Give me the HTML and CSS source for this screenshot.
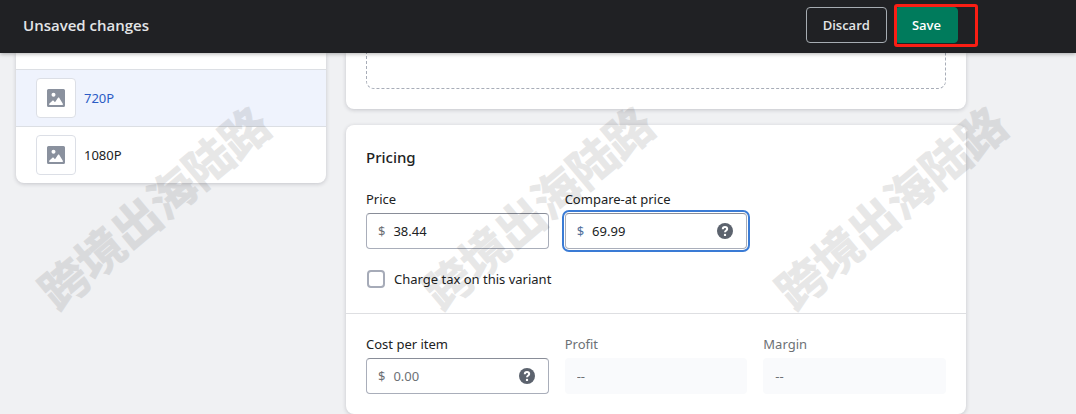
FILE: index.html
```html
<!DOCTYPE html>
<html lang="en">
<head>
    <meta charset="UTF-8">
    <meta name="viewport" content="width=device-width, initial-scale=1.0">
    <title>Unsaved changes</title>
    <link rel="stylesheet" href="styles.css">
</head>
<body>
    <header class="topbar">
        <h1>Unsaved changes</h1>
        <div class="actions">
            <button type="button" class="btn">Discard</button>
            <div class="save">
                <button type="submit" form="variant-form" class="btn btn-primary">Save</button>
                <span class="highlight"></span>
            </div>
        </div>
    </header>

    <div class="page">
        <nav class="card variants">
            <a href="#720p" class="variant active">
                <span class="thumb">
                    <svg viewBox="0 0 20 20" width="20" height="20"><path fill-rule="evenodd" d="M2.5 1h15A1.5 1.5 0 0 1 19 2.5v15a1.5 1.5 0 0 1-1.5 1.5h-15A1.5 1.5 0 0 1 1 17.5v-15A1.5 1.5 0 0 1 2.500 1zM7.500 4.700a2 2 0 1 0 0 4 2 2 0 0 0 0-4zM3.900 17h12.200c.7 0 1.100-.7.700-1.300L13.200 9.800c-.3-.5-.9-.5-1.200 0l-3 4.500-1.400-1.600c-.3-.4-.9-.4-1.200.1l-3.200 3c-.4.500 0 1.200.7 1.200z"/></svg>
                </span>
                720P
            </a>
            <a href="#1080p" class="variant">
                <span class="thumb">
                    <svg viewBox="0 0 20 20" width="20" height="20"><path fill-rule="evenodd" d="M2.5 1h15A1.5 1.5 0 0 1 19 2.5v15a1.5 1.5 0 0 1-1.5 1.5h-15A1.5 1.5 0 0 1 1 17.5v-15A1.5 1.5 0 0 1 2.500 1zM7.500 4.700a2 2 0 1 0 0 4 2 2 0 0 0 0-4zM3.900 17h12.200c.7 0 1.100-.7.700-1.300L13.200 9.800c-.3-.5-.9-.5-1.200 0l-3 4.500-1.400-1.600c-.3-.4-.9-.4-1.200.1l-3.200 3c-.4.500 0 1.200.7 1.200z"/></svg>
                </span>
                1080P
            </a>
        </nav>

        <main>
            <section class="card options">
                <div class="dropzone"></div>
            </section>

            <form id="variant-form" class="card">
                <section class="section">
                    <h2>Pricing</h2>
                    <div class="fields">
                        <div class="field">
                            <label for="price">Price</label>
                            <div class="input">
                                <span class="prefix">$</span>
                                <input type="text" id="price" value="38.44">
                            </div>
                        </div>
                        <div class="field">
                            <label for="compare">Compare-at price</label>
                            <div class="input focused">
                                <span class="prefix">$</span>
                                <input type="text" id="compare" value="69.99">
                                <svg class="help" viewBox="0 0 16 16" width="16" height="16"><circle cx="8" cy="8" r="8"/><path d="M5.800 6.300C5.800 4.900 6.700 4.100 8 4.100s2.200.8 2.200 1.900C10.200 7.600 8 7.500 8 9.300"/><circle class="dot" cx="8" cy="11.900" r="1.200"/></svg>
                            </div>
                        </div>
                    </div>
                    <div class="check">
                        <input type="checkbox" id="tax">
                        <label for="tax">Charge tax on this variant</label>
                    </div>
                </section>

                <section class="section">
                    <div class="fields">
                        <div class="field">
                            <label for="cost">Cost per item</label>
                            <div class="input">
                                <span class="prefix">$</span>
                                <input type="text" id="cost" placeholder="0.00">
                                <svg class="help" viewBox="0 0 16 16" width="16" height="16"><circle cx="8" cy="8" r="8"/><path d="M5.800 6.300C5.800 4.900 6.700 4.100 8 4.100s2.200.8 2.200 1.900C10.200 7.600 8 7.500 8 9.300"/><circle class="dot" cx="8" cy="11.900" r="1.200"/></svg>
                            </div>
                        </div>
                        <div class="field disabled">
                            <label for="profit">Profit</label>
                            <div class="input">
                                <input type="text" id="profit" value="--" disabled>
                            </div>
                        </div>
                        <div class="field disabled">
                            <label for="margin">Margin</label>
                            <div class="input">
                                <input type="text" id="margin" value="--" disabled>
                            </div>
                        </div>
                    </div>
                </section>
            </form>
        </main>
    </div>

    <div class="watermark first" lang="zh">跨境出海陆路</div>
    <div class="watermark second" lang="zh">跨境出海陆路</div>
    <div class="watermark third" lang="zh">跨境出海陆路</div>
</body>
</html>
```
FILE: styles.css
```css
* { box-sizing: border-box; }
body { margin: 0; position: relative; overflow-x: hidden; background: #f0f1f3; color: #202223; font: 13px/20px "Noto Sans", "Open Sans", sans-serif; }
h1, h2 { margin: 0; }
input, button { font: inherit; color: inherit; }

/* top bar */
.topbar { position: relative; z-index: 1; display: flex; align-items: center; justify-content: space-between; padding: 7px 118px 10px 23px; background: #202124; color: #e3e5e7; box-shadow: 0 1px 4px rgba(0, 0, 0, 0.3); }
.topbar h1 { font-family: "Open Sans", sans-serif; font-size: 15px; font-weight: 600; line-height: 24px; }
.actions { display: flex; gap: 8px; }
.btn { display: block; height: 36px; padding: 0 16px; border: 1px solid #a6acb2; border-radius: 4px; background: transparent; font-family: "Open Sans", sans-serif; font-weight: 600; }
.btn-primary { border-color: #007b5c; background: #007b5c; color: #fff; }
.save { position: relative; }
.highlight { position: absolute; top: -3px; bottom: -4px; left: -1px; right: -20px; border: 3px solid #fa1e14; border-radius: 3px; pointer-events: none; }

/* layout */
.page { display: grid; grid-template-columns: 1fr 2fr; gap: 20px; align-items: start; padding: 0 110px 0 16px; }
main { display: grid; gap: 16px; }
.card { overflow: hidden; border-radius: 8px; background: #fff; box-shadow: 0 1px 4px rgba(23, 24, 40, 0.2); }

/* variant list */
.variants { padding-top: 16px; border-radius: 0 0 8px 8px; }
.variant { display: flex; align-items: center; gap: 8px; padding: 8px 20px; border-top: 1px solid #dcdfe4; color: #202223; text-decoration: none; }
.variant.active { background: #eff3fd; color: #2c5cc5; }
.thumb { display: flex; align-items: center; justify-content: center; width: 40px; height: 40px; border: 1px solid #dcdfe6; border-radius: 4px; background: #fff; }
.thumb svg { fill: #8a919e; }

/* main column */
.options { padding: 0 20px 20px; border-radius: 0 0 8px 8px; }
.dropzone { height: 36px; border: 1px dashed #a8adb8; border-top: 0; border-radius: 0 0 8px 8px; }
.section { padding: 20px; }
.section + .section { border-top: 1px solid #dedfe2; }
.section h2 { margin-bottom: 20px; font-size: 15px; font-weight: 500; line-height: 24px; }
.fields { display: grid; grid-template-columns: repeat(3, minmax(0, 1fr)); gap: 16px; }
.field label { display: block; margin-bottom: 4px; }
.input { display: flex; align-items: center; gap: 8px; height: 36px; padding: 0 13px 0 11px; border: 1px solid #a9aeba; border-top-color: #898d98; border-radius: 4px; background: #fff; }
.input input { flex: 1; min-width: 0; padding: 0; border: 0; outline: 0; background: transparent; }
.input input::placeholder { color: #6d7175; opacity: 1; }
.prefix { color: #6d7175; }
.focused { box-shadow: 0 0 0 1px #fff, 0 0 0 3px #3a7bd5; }
.focused .prefix { color: #54719c; }
.help { fill: #5c636e; }
.help path { fill: none; stroke: #fff; stroke-width: 2; }
.help .dot { fill: #fff; }
.disabled { color: #6d7175; }
.disabled .input { border-color: transparent; background: #f9fafc; }
.check { display: flex; align-items: center; gap: 8px; height: 28px; margin-top: 16px; }
.check input { appearance: none; width: 18px; height: 18px; margin: 0 1px; border: 2px solid #a6abb8; border-radius: 4px; background: #fff; }

/* watermark over the whole page */
.watermark { position: absolute; z-index: 2; top: 176px; width: 282px; margin-left: -141px; transform: rotate(-40deg); opacity: 0.09; color: #000; font: bold 47px/60px "Noto Sans CJK SC", sans-serif; -webkit-text-stroke: 1px #000; white-space: nowrap; pointer-events: none; }
.first { left: 153px; }
.second { left: 537px; }
.third { left: 890px; }
```
